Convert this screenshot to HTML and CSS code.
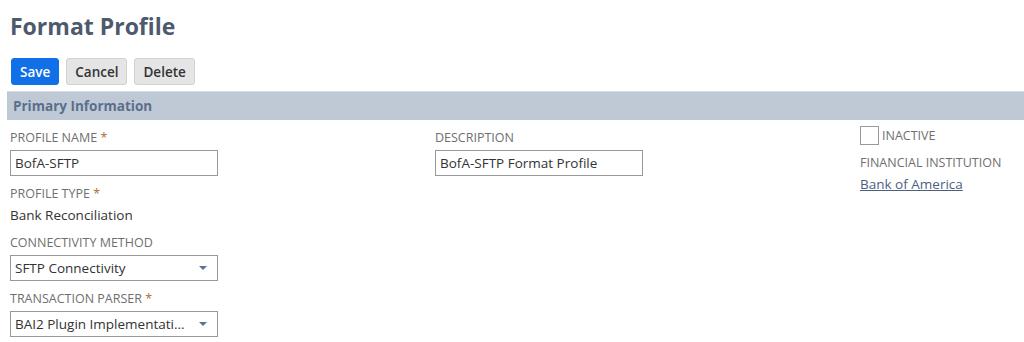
FILE: index.html
```html
<!DOCTYPE html>
<html lang="en">
  <head>
    <meta charset="UTF-8" />
    <meta name="viewport" content="width=device-width, initial-scale=1.0" />
    <title>Format Profile</title>
    <link rel="stylesheet" href="styles.css">
  </head>
  <body>
    <h1 class="page-title">Format Profile</h1>
    <div class="actions">
      <button class="btn btn-primary">Save</button>
      <button class="btn">Cancel</button>
      <button class="btn">Delete</button>
    </div>
    <div class="section-bar">Primary Information</div>
    <div class="form-grid">
      <div class="col">
        <div class="field">
          <label class="label">Profile Name <span class="req">*</span></label>
          <input class="input" type="text" value="BofA-SFTP" />
        </div>
        <div class="field field-static">
          <label class="label">Profile Type <span class="req">*</span></label>
          <div class="value">Bank Reconciliation</div>
        </div>
        <div class="field">
          <label class="label">Connectivity Method</label>
          <div class="select">
            <span>SFTP Connectivity</span>
            <span class="caret"></span>
          </div>
        </div>
        <div class="field">
          <label class="label">Transaction Parser <span class="req">*</span></label>
          <div class="select">
            <span>BAI2 Plugin Implementati...</span>
            <span class="caret"></span>
          </div>
        </div>
      </div>
      <div class="col">
        <div class="field">
          <label class="label">Description</label>
          <input class="input" type="text" value="BofA-SFTP Format Profile" />
        </div>
      </div>
      <div class="col">
        <div class="check-row">
          <span class="checkbox"></span>
          <span class="label">Inactive</span>
        </div>
        <div class="field">
          <label class="label">Financial Institution</label>
          <a class="link" href="#">Bank of America</a>
        </div>
      </div>
    </div>
  </body>
</html>
```

FILE: styles.css
```css
body {
  margin: 0;
  font-family: "Open Sans", Arial, sans-serif;
  color: #333;
  background: #fff;
}
.page-title {
  margin: 0;
  padding: 9px 10px 0;
  font-size: 23px;
  line-height: 34px;
  font-weight: 700;
  color: #4d5a6d;
}
.actions {
  display: flex;
  gap: 7px;
  padding: 15px 10px 0 11px;
}
.btn {
  height: 27px;
  padding: 0 8px;
  font-family: inherit;
  font-size: 13.5px;
  font-weight: 600;
  color: #333;
  background: #e5e5e5;
  border: 1px solid #d2d2d2;
  border-radius: 3px;
}
.btn-primary {
  background: #1170e8;
  border-color: #1170e8;
  color: #fff;
}
.section-bar {
  margin: 6px 0 0 7px;
  height: 28px;
  line-height: 28px;
  padding-left: 6px;
  background: #bfc9d6;
  border-top: 1px solid #d6dde6;
  font-size: 13.5px;
  font-weight: 700;
  color: #5b6e8c;
}
.form-grid {
  display: grid;
  grid-template-columns: 425px 425px 1fr;
  padding: 8px 0 0 10px;
}
.col {
  display: flex;
  flex-direction: column;
}
.field {
  display: flex;
  flex-direction: column;
  margin-bottom: 8px;
}
.field-static {
  margin-bottom: 9px;
}
.label {
  font-size: 12.5px;
  line-height: 19px;
  margin-bottom: 3px;
  text-transform: uppercase;
  color: #6f6f6f;
}
.req {
  color: #b0703a;
}
.input,
.select {
  box-sizing: border-box;
  width: 208px;
  height: 26px;
  padding: 0 4px;
  font-family: inherit;
  font-size: 13.5px;
  color: #333;
  border: 1px solid #999;
  border-radius: 0;
  background: #fff;
  outline: none;
}
.select {
  display: flex;
  align-items: center;
  justify-content: space-between;
  padding-right: 10px;
}
.caret {
  width: 0;
  height: 0;
  border-left: 4.5px solid transparent;
  border-right: 4.5px solid transparent;
  border-top: 4.5px solid #5a6f96;
}
.value {
  font-size: 13.5px;
  line-height: 18px;
  color: #333;
}
.check-row {
  display: flex;
  align-items: center;
  gap: 3px;
  margin-top: -2px;
  margin-bottom: 8px;
}
.check-row .label {
  margin-bottom: 0;
}
.checkbox {
  box-sizing: border-box;
  width: 19px;
  height: 19px;
  border: 1px solid #999;
}
.link {
  font-size: 13.5px;
  line-height: 18px;
  color: #4d5f7f;
}
```
